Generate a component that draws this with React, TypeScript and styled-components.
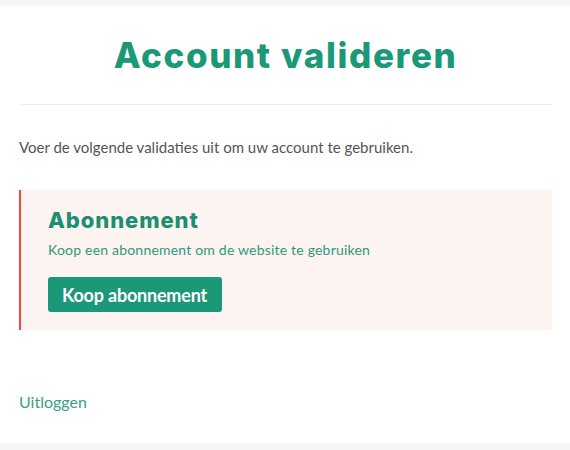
import React from "react";
import styled, { createGlobalStyle } from "styled-components";

const Global = createGlobalStyle`
  html, body { margin: 0; padding: 0; background: #f6f6f6; }
  body { font-family: Lato, "Open Sans", sans-serif; }
`;

const Page = styled.div`
  padding-top: 6px;
  padding-bottom: 6px;
`;

const Card = styled.main`
  background: #ffffff;
  padding: 28px 18px 0 19px;
  height: 437px;
  box-sizing: border-box;
  display: flex;
  flex-direction: column;
`;

const Title = styled.h1`
  margin: 0;
  font-family: Inter, sans-serif;
  font-weight: 800;
  font-size: 35px;
  line-height: 42px;
  letter-spacing: 1.6px;
  color: #1b9877;
  text-align: center;
  padding-bottom: 28px;
  border-bottom: 1px solid #eeeeee;
`;

const Intro = styled.p`
  margin: 32px 0 0;
  font-size: 15px;
  line-height: 20px;
  color: #555555;
`;

const Alert = styled.section`
  margin-top: 33px;
  background: #fdf3f1;
  border-left: 2px solid #f2473a;
  padding: 15px 24px 18px 27px;
  display: flex;
  flex-direction: column;
  align-items: flex-start;
`;

const AlertTitle = styled.h2`
  margin: 0;
  font-family: Inter, sans-serif;
  font-weight: 800;
  font-size: 22px;
  line-height: 30px;
  letter-spacing: 0.9px;
  color: #1b8f70;
`;

const AlertText = styled.p`
  margin: 6px 0 0;
  font-size: 14px;
  line-height: 18px;
  letter-spacing: 0.2px;
  color: #2c9a7c;
`;

const Button = styled.button`
  margin-top: 18px;
  height: 35px;
  padding: 0 15px 0 14px;
  border: none;
  border-radius: 3px;
  background: #1b9877;
  color: #ffffff;
  font-family: Lato, sans-serif;
  font-weight: 700;
  font-size: 18px;
  letter-spacing: -0.2px;
  cursor: pointer;
`;

const Logout = styled.a`
  margin-top: 62px;
  align-self: flex-start;
  font-size: 16px;
  line-height: 20px;
  color: #3a9f85;
  text-decoration: none;
`;

export default function App() {
  return (
    <>
      <Global />
      <Page>
        <Card>
          <Title>Account valideren</Title>
          <Intro>Voer de volgende validaties uit om uw account te gebruiken.</Intro>
          <Alert>
            <AlertTitle>Abonnement</AlertTitle>
            <AlertText>Koop een abonnement om de website te gebruiken</AlertText>
            <Button>Koop abonnement</Button>
          </Alert>
          <Logout href="#">Uitloggen</Logout>
        </Card>
      </Page>
    </>
  );
}
